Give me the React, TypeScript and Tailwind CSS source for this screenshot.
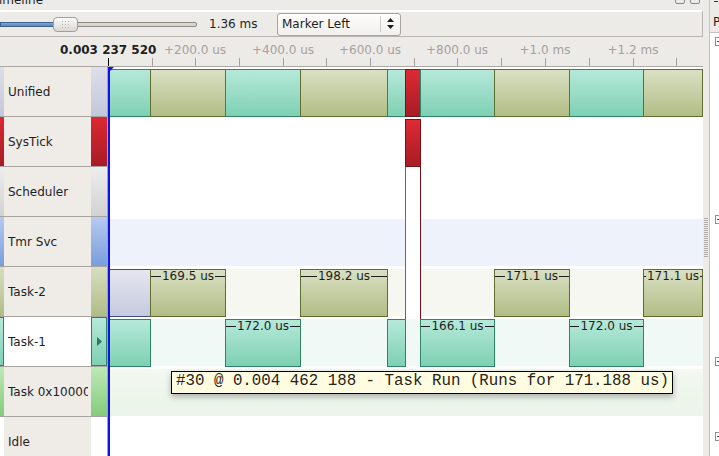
import React from 'react';

type Kind = 'teal' | 'olive' | 'red' | 'lav';

const BOX: Record<Kind, string> = {
  teal: 'bg-linear-to-b from-[#b6e9da] to-[#7dd0b3] border-[#2e8566]',
  olive: 'bg-linear-to-b from-[#dae0c4] to-[#b2bd85] border-[#5f6d30]',
  red: 'bg-linear-to-b from-[#de2a35] to-[#a81b25] border-[#7b1016]',
  lav: 'bg-linear-to-b from-[#e6e6ef] to-[#c5cadf] border-[#3c4e86]',
};

const ROWS = [
  { name: 'Unified', stripe: 'bg-linear-to-b from-[#dddee9] to-[#c3c7da]', chart: 'bg-white' },
  { name: 'SysTick', stripe: 'bg-linear-to-b from-[#dc2832] to-[#a81c26]', chart: 'bg-white' },
  { name: 'Scheduler', stripe: 'bg-linear-to-b from-[#ededed] to-[#d2d2d2]', chart: 'bg-white' },
  { name: 'Tmr Svc', stripe: 'bg-linear-to-b from-[#b7caf1] to-[#7a9ddb]', chart: 'bg-[#eef2fb]' },
  { name: 'Task-2', stripe: 'bg-linear-to-b from-[#d8dec1] to-[#b0bc86]', chart: 'bg-[#f7f7f2]' },
  { name: 'Task-1', stripe: 'bg-linear-to-b from-[#b6e9da] to-[#7dd0b3]', chart: 'bg-[#f1f9f6]' },
  { name: 'Task 0x10000', stripe: 'bg-linear-to-b from-[#bde9b5] to-[#84cc7c]', chart: 'bg-linear-to-b from-[#f3f8f1] to-[#eaf4e8]' },
  { name: 'Idle', stripe: 'bg-white', chart: 'bg-white' },
];

const SEGS: { r: number; x0: number; x1: number; k: Kind; label?: string }[] = [
  { r: 0, x0: 108, x1: 150, k: 'teal' },
  { r: 0, x0: 150, x1: 225, k: 'olive' },
  { r: 0, x0: 225, x1: 300, k: 'teal' },
  { r: 0, x0: 300, x1: 387, k: 'olive' },
  { r: 0, x0: 387, x1: 405, k: 'teal' },
  { r: 0, x0: 405, x1: 420, k: 'red' },
  { r: 0, x0: 420, x1: 494, k: 'teal' },
  { r: 0, x0: 494, x1: 569, k: 'olive' },
  { r: 0, x0: 569, x1: 643, k: 'teal' },
  { r: 0, x0: 643, x1: 702, k: 'olive' },
  { r: 1, x0: 405, x1: 420, k: 'red' },
  { r: 4, x0: 108, x1: 150, k: 'lav' },
  { r: 4, x0: 150, x1: 225, k: 'olive', label: '169.5 us' },
  { r: 4, x0: 300, x1: 387, k: 'olive', label: '198.2 us' },
  { r: 4, x0: 494, x1: 569, k: 'olive', label: '171.1 us' },
  { r: 4, x0: 643, x1: 702, k: 'olive', label: '171.1 us' },
  { r: 5, x0: 108, x1: 150, k: 'teal' },
  { r: 5, x0: 225, x1: 300, k: 'teal', label: '172.0 us' },
  { r: 5, x0: 387, x1: 405, k: 'teal' },
  { r: 5, x0: 420, x1: 494, k: 'teal', label: '166.1 us' },
  { r: 5, x0: 569, x1: 643, k: 'teal', label: '172.0 us' },
];

const MINOR = [152, 239, 326, 414, 501, 589, 676];
const MAJOR = [
  { x: 195, t: '+200.0 us' },
  { x: 283, t: '+400.0 us' },
  { x: 370, t: '+600.0 us' },
  { x: 457, t: '+800.0 us' },
  { x: 545, t: '+1.0 ms' },
  { x: 633, t: '+1.2 ms' },
];

function Slider() {
  return (
    <div className="relative w-[197px] h-[24px] shrink-0">
      <div className="absolute left-0 top-[10px] w-[197px] h-[5px] flex">
        <div className="w-[56px] h-full bg-linear-to-b from-[#86a6d2] to-[#5b83bb] border border-[#3e6494]" />
        <div className="flex-1 h-full bg-[#d9d5cf] border border-[#8e8a85] rounded-r-[2px]" />
      </div>
      <div className="absolute left-[53px] top-[5px] w-[25px] h-[15px] rounded-[4px] border border-[#a29e99] bg-linear-to-b from-[#fbfaf9] to-[#dcd8d3] flex items-center justify-center">
        <svg width="7" height="7" viewBox="0 0 7 7">
          {[0, 3, 6].map((x) =>
            [0, 3, 6].map((y) => <rect key={`${x}-${y}`} x={x} y={y} width="1" height="1" fill="#b4b0ab" />)
          )}
        </svg>
      </div>
    </div>
  );
}

function Combo() {
  return (
    <div className="w-[124px] h-[23px] shrink-0 rounded-[3px] border border-[#a8a4a0] bg-linear-to-b from-[#fdfdfc] to-[#f1f0ee] flex items-center">
      <span className="flex-1 pl-[4px] text-[12px] leading-[15px] text-[#1e1e1e]">Marker Left</span>
      <div className="w-px h-[16px] bg-[#cfcbc6]" />
      <div className="w-[19px] flex justify-center">
        <svg width="7" height="12" viewBox="0 0 7 12">
          <polygon points="3.5,0 7,4 0,4" fill="#1e1e1e" />
          <polygon points="0,7 7,7 3.5,11" fill="#1e1e1e" />
        </svg>
      </div>
    </div>
  );
}

function LabelRow({ i }: { i: number }) {
  const row = ROWS[i];
  const sel = row.name === 'Task-1';
  return (
    <div className="h-[50px] shrink-0 flex border-b border-[#a7a39f]">
      <div className={`w-[4px] ${row.stripe} ${sel ? 'border border-l-0 border-[#2e8566]' : ''}`} />
      <div className={`w-[87px] flex items-center pl-[4px] pt-px ${sel ? 'bg-white' : 'bg-[#efece8]'}`}>
        <span className="block w-[80px] overflow-hidden text-[12px] leading-[15px] text-[#1e1e1e] whitespace-nowrap">{row.name}</span>
      </div>
      <div className={`w-[16px] ${row.stripe} ${sel ? 'border border-[#2e8566] flex items-center justify-center' : ''}`}>
        {sel && (
          <svg width="5" height="9" viewBox="0 0 5 9">
            <polygon points="0,0 5,4.5 0,9" fill="#2b7a5c" />
          </svg>
        )}
      </div>
    </div>
  );
}

function Seg({ s }: { s: (typeof SEGS)[number] }) {
  return (
    <div
      className={`absolute border ${BOX[s.k]}`}
      style={{ left: s.x0 - 108, width: s.x1 - s.x0 + 1, top: s.r * 50 + 2, height: 48 }}
    >
      {s.label && (
        <div className="flex items-center h-[15px] -mt-[1px]">
          <div className="flex-1 h-px bg-[#1e1e1e]" />
          <span className="px-[1px] text-[12px] leading-[15px] text-[#1e1e1e] whitespace-nowrap">{s.label}</span>
          <div className="flex-1 h-px bg-[#1e1e1e]" />
        </div>
      )}
    </div>
  );
}

function Expander() {
  return (
    <div className="w-[9px] h-[9px] border border-[#8e8e8e] bg-white flex items-center justify-center">
      <div className="w-[5px] h-px bg-[#555]" />
    </div>
  );
}

export default function App() {
  return (
    <div className="w-[719px] h-[456px] overflow-hidden bg-[#edebe7] flex font-['DejaVu_Sans',sans-serif]">
      {/* Timeline dock */}
      <div className="w-[703px] h-[456px] shrink-0 flex flex-col overflow-hidden">
        {/* title strip */}
        <div className="h-[10px] shrink-0 relative overflow-hidden flex">
          <span className="-mt-[7px] -ml-[8px] text-[12px] leading-[15px] text-[#1e1e1e]">Timeline</span>
          <div className="ml-auto mr-[3px] flex gap-[5px] -mt-[6px]">
            <div className="w-[10px] h-[10px] rounded-[2px] border border-[#8a8884]" />
            <div className="w-[10px] h-[10px] rounded-[2px] border border-[#8a8884]" />
          </div>
        </div>

        {/* toolbar */}
        <div className="h-[27px] shrink-0 border-t-2 border-t-white border-r border-b border-[#b9b5b0] flex items-center">
          <Slider />
          <div className="w-[80px] shrink-0 pl-[12px] text-[12px] leading-[15px] text-[#1e1e1e]">1.36 ms</div>
          <Combo />
        </div>

        {/* ruler */}
        <div className="relative h-[30px] shrink-0 border-b border-[#aaa6a2] text-[12px] leading-[15px]">
          <span className="absolute left-[60px] top-[6px] font-bold text-[#1e1e1e] whitespace-nowrap">0.003 237 520</span>
          {MAJOR.map((m) => (
            <span key={m.t} className="absolute top-[6px] -translate-x-1/2 text-[#a5a19d] whitespace-nowrap" style={{ left: m.x }}>
              {m.t}
            </span>
          ))}
          <div className="absolute left-[108px] top-[21px] w-px h-[8px] bg-black" />
          {[...MINOR, ...MAJOR.map((m) => m.x)].map((x) => (
            <div key={x} className="absolute top-[21px] w-px h-[8px] bg-[#a5a19d]" style={{ left: x }} />
          ))}
        </div>

        {/* rows */}
        <div className="flex flex-1 min-h-0 overflow-hidden">
          <div className="w-[107px] shrink-0 flex flex-col">
            {ROWS.map((_, i) => (
              <LabelRow key={i} i={i} />
            ))}
          </div>
          <div className="w-px shrink-0 bg-[#a7a39f]" />
          <div className="relative w-[595px] shrink-0 bg-white">
            {ROWS.map((r) => (
              <div key={r.name} className="h-[50px] pt-[2px]">
                <div className={`h-[47px] ${r.chart}`} />
              </div>
            ))}

            {/* context switch */}
            <div className="absolute left-[297px] top-[100px] w-[16px] h-[152px] bg-white border-l border-l-[#2e8566] border-r border-r-[#7b1016]" />

            {SEGS.map((s, i) => (
              <Seg key={i} s={s} />
            ))}

            {/* cursor */}
            <div className="absolute left-0 top-0 w-[2px] h-full bg-[#1010e8]" />
            <svg className="absolute left-0 top-0" width="6" height="6" viewBox="0 0 6 6">
              <polygon points="0,0 6,0 0,6" fill="#1010e8" />
            </svg>

            {/* tooltip */}
            <div className="absolute left-[63px] top-[304px] w-[502px] h-[23px] border border-black bg-[#fffde1] shadow-[0_3px_6px_rgba(0,0,0,0.28)] pl-[4px] font-['Liberation_Mono',monospace] text-[15.8px] leading-[19px] text-[#2a2418] whitespace-nowrap">
              #30 @ 0.004 462 188 - Task Run (Runs for 171.188 us)
            </div>
          </div>
        </div>
      </div>

      {/* splitter */}
      <div className="w-[6px] shrink-0 flex flex-col items-center">
        <div className="mt-[218px] w-[4px] h-[40px] bg-[repeating-linear-gradient(to_bottom,#aeaaa5_0px,#aeaaa5_1px,transparent_1px,transparent_2px)]" />
      </div>

      {/* side panel */}
      <div className="flex-1 min-w-0 overflow-hidden border-l border-[#c6c2bd] flex flex-col">
        <div className="h-[33px] shrink-0 border-b border-[#c6c2bd] pl-[3px] relative">
          <div className="absolute left-[4px] top-[1px] w-[4px] h-px bg-[#333]" />
          <span className="block pt-[15px] text-[12px] leading-[15px] text-[#2a2018]">P</span>
        </div>
        <div className="flex-1 bg-white pl-[5px] flex flex-col">
          <div className="mt-[4px]"><Expander /></div>
          <div className="mt-[169px]"><Expander /></div>
          <div className="mt-[133px]"><Expander /></div>
          <div className="mt-[66px]"><Expander /></div>
        </div>
      </div>
    </div>
  );
}
